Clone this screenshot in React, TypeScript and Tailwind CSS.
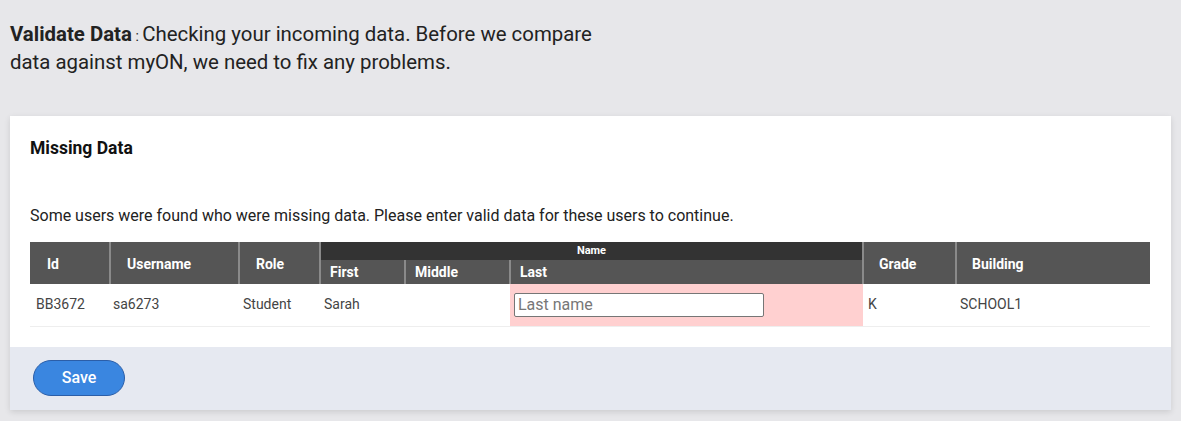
export default function App() {
  const headBase = "bg-[#555] text-white font-bold text-[14px] text-left align-middle";
  const headCell = `${headBase} border-r-2 border-[#8a8a8a]`;
  const bodyCell = "text-[14px] text-[#444] align-middle";

  return (
    <div className="min-h-[421px] bg-[#e7e7ea] px-[10px] pt-[20px] font-['Roboto',sans-serif]">
      {/* Intro */}
      <p className="w-[590px] text-[20.4px] leading-[28px] text-[#222]">
        <span className="font-bold">Validate Data</span>
        <span className="text-[14px] leading-none"> : </span>
        Checking your incoming data. Before we compare data against myON, we need to fix any problems.
      </p>

      {/* Card */}
      <div className="mt-[40px] bg-white shadow-[0_2px_6px_rgba(0,0,0,0.12)]">
        <div className="px-[20px] pt-[21px] pb-[20px]">
          <h2 className="text-[17.5px] font-bold text-[#111] leading-[22px]">Missing Data</h2>
          <p className="mt-[47px] text-[16px] text-[#222] leading-[20px]">
            Some users were found who were missing data. Please enter valid data for these users to continue.
          </p>

          <table className="mt-[16px] w-[1120px] table-fixed border-collapse">
            <colgroup>
              <col className="w-[80px]" />
              <col className="w-[129px]" />
              <col className="w-[81px]" />
              <col className="w-[85px]" />
              <col className="w-[105px]" />
              <col className="w-[353px]" />
              <col className="w-[93px]" />
              <col className="w-[194px]" />
            </colgroup>
            <thead>
              <tr className="h-[18px]">
                <th rowSpan={2} className={`${headCell} pl-[17px] pt-[3px]`}>Id</th>
                <th rowSpan={2} className={`${headCell} pl-[16px] pt-[3px]`}>Username</th>
                <th rowSpan={2} className={`${headCell} pl-[16px] pt-[3px]`}>Role</th>
                <th
                  colSpan={3}
                  className="bg-[#333] text-white font-bold text-[11px] leading-[18px] text-center border-r-2 border-[#8a8a8a]"
                >
                  Name
                </th>
                <th rowSpan={2} className={`${headCell} pl-[15px] pt-[3px]`}>Grade</th>
                <th rowSpan={2} className={`${headBase} pl-[15px] pt-[3px]`}>Building</th>
              </tr>
              <tr className="h-[24px]">
                <th className={`${headCell} pl-[9px]`}>First</th>
                <th className={`${headCell} pl-[9px]`}>Middle</th>
                <th className={`${headCell} pl-[9px]`}>Last</th>
              </tr>
            </thead>
            <tbody>
              <tr className="h-[42px] border-b border-[#eee]">
                <td className={`${bodyCell} pl-[6px]`}>BB3672</td>
                <td className={`${bodyCell} pl-[3px]`}>sa6273</td>
                <td className={`${bodyCell} pl-[4px]`}>Student</td>
                <td className={`${bodyCell} pl-[4px]`}>Sarah</td>
                <td className={bodyCell}></td>
                <td className="bg-[#ffd0d0] pl-[4px] align-middle">
                  <input
                    type="text"
                    placeholder="Last name"
                    className="block w-[250px] h-[24px] bg-white border border-[#767676] rounded-[2px] px-[3px] text-[16px] text-[#333] placeholder:text-[#777] outline-none"
                  />
                </td>
                <td className={`${bodyCell} pl-[5px]`}>K</td>
                <td className={`${bodyCell} pl-[4px]`}>SCHOOL1</td>
              </tr>
            </tbody>
          </table>
        </div>

        {/* Footer */}
        <div className="bg-[#e6e9f1] h-[63px] flex items-center px-[23px]">
          <button className="w-[92px] h-[36px] rounded-full bg-[#3a86e0] border border-[#2b5ea8] text-white text-[16px] font-medium">
            Save
          </button>
        </div>
      </div>
    </div>
  );
}
